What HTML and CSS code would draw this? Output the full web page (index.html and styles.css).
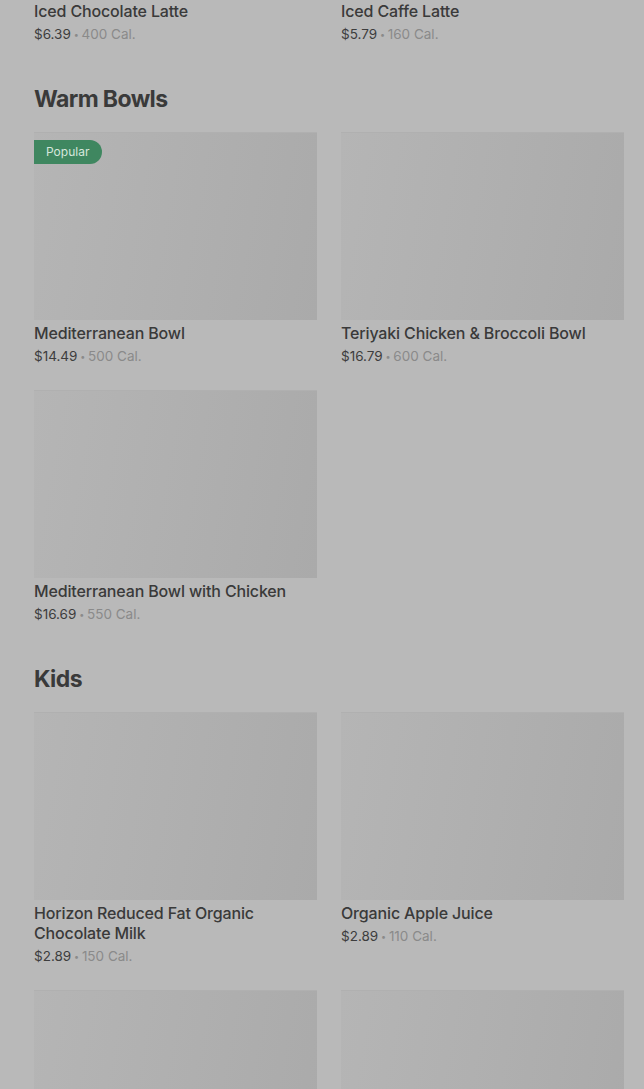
FILE: index.html
```html
<!DOCTYPE html>
<html lang="en">
<head>
    <meta charset="UTF-8">
    <meta name="viewport" content="width=device-width, initial-scale=1.0">
    <title>Menu</title>
    <link rel="stylesheet" href="styles.css">
</head>
<body>
    <div class="menu">
        <section class="menu-section first">
            <div class="item-grid">
                <div class="item">
                    <div class="item-image"></div>
                    <div class="item-name">Iced Chocolate Latte</div>
                    <div class="item-meta"><span class="price">$6.39</span> <span class="dot">•</span> <span class="cal">400 Cal.</span></div>
                </div>
                <div class="item">
                    <div class="item-image"></div>
                    <div class="item-name">Iced Caffe Latte</div>
                    <div class="item-meta"><span class="price">$5.79</span> <span class="dot">•</span> <span class="cal">160 Cal.</span></div>
                </div>
            </div>
        </section>

        <section class="menu-section">
            <h2>Warm Bowls</h2>
            <div class="item-grid">
                <div class="item">
                    <div class="item-image">
                        <span class="badge">Popular</span>
                    </div>
                    <div class="item-name">Mediterranean Bowl</div>
                    <div class="item-meta"><span class="price">$14.49</span> <span class="dot">•</span> <span class="cal">500 Cal.</span></div>
                </div>
                <div class="item">
                    <div class="item-image"></div>
                    <div class="item-name">Teriyaki Chicken &amp; Broccoli Bowl</div>
                    <div class="item-meta"><span class="price">$16.79</span> <span class="dot">•</span> <span class="cal">600 Cal.</span></div>
                </div>
                <div class="item">
                    <div class="item-image"></div>
                    <div class="item-name">Mediterranean Bowl with Chicken</div>
                    <div class="item-meta"><span class="price">$16.69</span> <span class="dot">•</span> <span class="cal">550 Cal.</span></div>
                </div>
            </div>
        </section>

        <section class="menu-section">
            <h2>Kids</h2>
            <div class="item-grid">
                <div class="item">
                    <div class="item-image"></div>
                    <div class="item-name">Horizon Reduced Fat Organic Chocolate Milk</div>
                    <div class="item-meta"><span class="price">$2.89</span> <span class="dot">•</span> <span class="cal">150 Cal.</span></div>
                </div>
                <div class="item">
                    <div class="item-image"></div>
                    <div class="item-name">Organic Apple Juice</div>
                    <div class="item-meta"><span class="price">$2.89</span> <span class="dot">•</span> <span class="cal">110 Cal.</span></div>
                </div>
                <div class="item">
                    <div class="item-image"></div>
                </div>
                <div class="item">
                    <div class="item-image"></div>
                </div>
            </div>
        </section>
    </div>
</body>
</html>
```

FILE: styles.css
```css
* {
    box-sizing: border-box;
}

body {
    margin: 0;
    background: #b9b9b9;
    font-family: Inter, 'Noto Sans', sans-serif;
    color: #3a3a3a;
    overflow: hidden;
}

.menu {
    padding: 0 20px 0 34px;
    margin-top: -190px;
}

.menu-section {
    margin-top: 39px;
}

.menu-section.first {
    margin-top: 0;
}

h2 {
    margin: 0 0 17px;
    font-size: 23px;
    line-height: 32px;
    font-weight: 700;
    letter-spacing: -0.6px;
    color: #3a3a3a;
}

.item-grid {
    display: grid;
    grid-template-columns: 1fr 1fr;
    column-gap: 24px;
    row-gap: 24px;
    align-items: start;
}

.item-image {
    position: relative;
    height: 188px;
    background: linear-gradient(100deg, #b5b5b5 0%, #afafaf 55%, #aaaaaa 100%);
    border-top: 1px solid #b0b0b0;
}

.badge {
    position: absolute;
    top: 7px;
    left: 0;
    height: 24px;
    padding: 0 13px 0 12px;
    border-radius: 0 12px 12px 0;
    background: #3f8760;
    color: #d6e6dc;
    font-size: 12px;
    line-height: 24px;
}

.item-name {
    margin-top: 3px;
    font-size: 16px;
    line-height: 20px;
    font-weight: 500;
    color: #3a3a3a;
    letter-spacing: -0.15px;
}

.item-meta {
    margin-top: 3px;
    font-size: 13.5px;
    line-height: 20px;
}

.price {
    color: #3d3d3d;
}

.dot {
    color: #8a8a8a;
    font-size: 9px;
    line-height: 1;
    vertical-align: 1px;
    margin: 0 -1px;
}

.cal {
    color: #8a8a8a;
}
```
